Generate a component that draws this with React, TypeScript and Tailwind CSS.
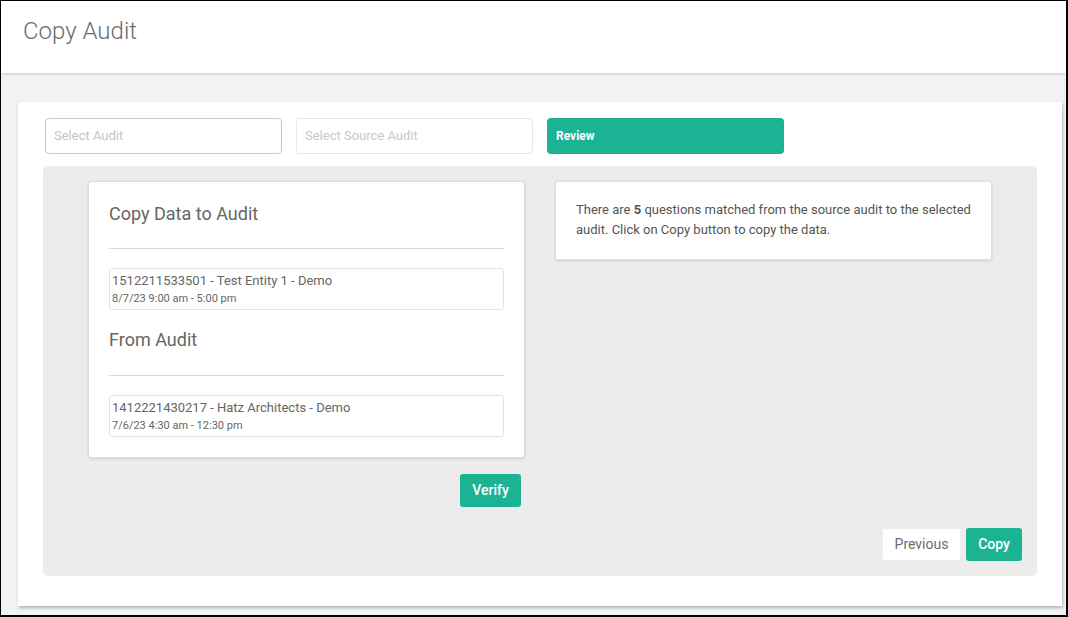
export default function App() {
  return (
    <div className="w-[1068px] h-[617px] border-l border-t border-r-2 border-b-2 border-black bg-[#f2f2f2] font-['Roboto',sans-serif] overflow-hidden flex flex-col">
      {/* Header */}
      <div className="h-[72px] bg-white shadow-[0_1px_3px_rgba(0,0,0,0.18)] pl-[22px] pt-[16px] shrink-0 relative z-10">
        <h1 className="text-[24px] leading-[28px] font-light text-[#6c6c6c]">Copy Audit</h1>
      </div>

      {/* Body */}
      <div className="pt-[29px] pl-[17px]">
        <div className="w-[1044px] h-[504px] bg-white shadow-[1px_2px_3px_rgba(0,0,0,0.25)] px-[25px] pt-[16px]">
          {/* Step selectors */}
          <div className="flex gap-[14px] pl-[2px]">
            <div className="w-[237px] h-[36px] border border-[#c8c8c8] rounded-[4px] pl-[8px] flex items-center text-[13px] text-[#c4c4c4]">
              Select Audit
            </div>
            <div className="w-[237px] h-[36px] border border-[#e6e6e6] rounded-[4px] pl-[8px] flex items-center text-[13px] text-[#c8c8c8]">
              Select Source Audit
            </div>
            <div className="w-[237px] h-[36px] bg-[#1bb394] rounded-[4px] pl-[9px] flex items-center text-[12px] font-bold text-white">
              Review
            </div>
          </div>

          {/* Review panel */}
          <div className="mt-[12px] w-[994px] h-[410px] bg-[#ececec] rounded-[5px] px-[30px] pt-[15px]">
            <div className="grid grid-cols-2">
              {/* Left column */}
              <div className="px-[15px]">
                <div className="bg-white border border-[#dcdcdc] rounded-[3px] shadow-[0_1px_3px_rgba(0,0,0,0.12)] px-[20px] pt-[18px] pb-[20px]">
                  <h4 className="text-[18px] leading-[27px] text-[#666]">Copy Data to Audit</h4>
                  <div className="mt-[21px] h-px bg-[#d9d9d9]" />
                  <div className="mt-[19px] h-[42px] border border-[#e4e4e4] rounded-[3px] px-[2px] py-[2px]">
                    <div className="text-[13px] leading-[19px] text-[#666]">1512211533501 - Test Entity 1 - Demo</div>
                    <div className="text-[11px] leading-[17px] text-[#666]">8/7/23 9:00 am - 5:00 pm</div>
                  </div>
                  <h4 className="mt-[16px] text-[18px] leading-[27px] text-[#666]">From Audit</h4>
                  <div className="mt-[22px] h-px bg-[#d9d9d9]" />
                  <div className="mt-[19px] h-[42px] border border-[#e4e4e4] rounded-[3px] px-[2px] py-[2px]">
                    <div className="text-[13px] leading-[19px] text-[#666]">1412221430217 - Hatz Architects - Demo</div>
                    <div className="text-[11px] leading-[17px] text-[#666]">7/6/23 4:30 am - 12:30 pm</div>
                  </div>
                </div>
              </div>

              {/* Right column */}
              <div className="px-[15px]">
                <div className="bg-white border border-[#dedede] rounded-[2px] shadow-[0_1px_3px_rgba(0,0,0,0.12)] pl-[20px] pr-[8px] pt-[18px] pb-[20px]">
                  <p className="text-[13px] leading-[19.5px] text-[#555]">
                    There are <span className="font-bold">5</span> questions matched from the source audit to the selected audit. Click on Copy button to copy the data.
                  </p>
                </div>
              </div>
            </div>

            {/* Verify */}
            <div className="mt-[16px] flex">
              <button className="ml-[387px] w-[61px] h-[33px] bg-[#1bb394] rounded-[3px] text-[14px] font-medium text-white">
                Verify
              </button>
            </div>

            {/* Navigation */}
            <div className="mt-[21px] -mr-[15px] flex justify-end gap-[5px]">
              <button className="w-[79px] h-[33px] bg-white border border-[#eeeeee] rounded-[3px] text-[14px] text-[#6c6c6c]">
                Previous
              </button>
              <button className="w-[56px] h-[33px] bg-[#1bb394] rounded-[3px] text-[14px] font-medium text-white">
                Copy
              </button>
            </div>
          </div>
        </div>
      </div>
    </div>
  );
}
